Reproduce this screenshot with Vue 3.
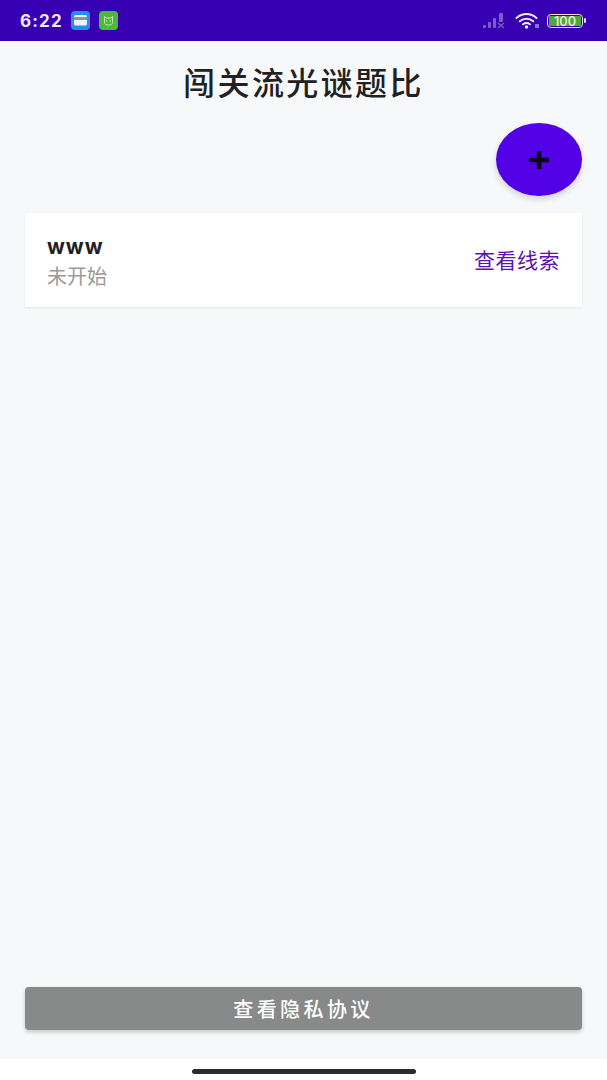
<script setup>
const quests = [{ name: 'www', status: '未开始' }];
</script>

<template>
  <div class="screen">
    <div class="status-bar">
      <div class="status-left">
        <span class="time">6:22</span>
        <svg class="app-icon" viewBox="0 0 19 19">
          <rect width="19" height="19" rx="4" fill="#2f86f5" />
          <rect x="3" y="4" width="13" height="10.500" rx="1.500" fill="#eef3fa" />
          <rect x="3" y="6" width="13" height="3" fill="#8a93a8" />
        </svg>
        <svg class="app-icon" viewBox="0 0 19 19">
          <rect width="19" height="19" rx="4" fill="#4fb83a" />
          <path d="M5.500 5.500l1.500 1.500h5l1.500-1.500v6c0 1.600-1.400 2.500-4 2.500s-4-.9-4-2.500z" fill="none" stroke="#cfeec6" stroke-width=".9" />
          <circle cx="7.800" cy="10" r=".7" fill="#cfeec6" />
          <circle cx="11.200" cy="10" r=".7" fill="#cfeec6" />
        </svg>
      </div>
      <div class="status-right">
        <svg class="signal" width="23" height="17" viewBox="0 0 23 17">
          <rect x="0" y="13" width="3" height="3" rx="1" fill="#7c5fc4" />
          <rect x="5" y="10" width="3" height="6" rx="1" fill="#7c5fc4" />
          <rect x="10" y="6" width="3" height="10" rx="1" fill="#7c5fc4" />
          <rect x="16" y="1" width="4" height="9" rx="1" fill="#7c5fc4" />
          <path d="M15 11l6 5M21 11l-6 5" stroke="#7c5fc4" stroke-width="1.400" />
        </svg>
        <svg class="wifi" width="25" height="17" viewBox="0 0 25 17">
          <path d="M1.500 6C7.500.8 15.500.8 21.500 6M4.800 9.300c4-3.300 9.400-3.300 13.400 0M8 12.300c2.200-1.600 4.800-1.600 7 0" fill="none" stroke="#f1e9fb" stroke-width="2" stroke-linecap="round" />
          <circle cx="11.500" cy="15" r="1.700" fill="#f1e9fb" />
          <rect x="20" y="12" width="4" height="4" fill="#8f70d0" />
        </svg>
        <div class="battery">
          <div class="battery-body"><span class="battery-fill">100</span></div>
          <div class="battery-cap"></div>
        </div>
      </div>
    </div>

    <div class="content">
      <h1 class="title">闯关流光谜题比</h1>
      <div class="fab-row">
        <button class="fab">
          <svg width="22" height="20" viewBox="0 0 22 20">
            <path d="M1 10h20M11 1v18" stroke="#0a0518" stroke-width="4.500" />
          </svg>
        </button>
      </div>
      <div v-for="q in quests" :key="q.name" class="card">
        <div class="card-info">
          <div class="card-name">{{ q.name }}</div>
          <div class="card-status">{{ q.status }}</div>
        </div>
        <span class="card-link">查看线索</span>
      </div>
      <div class="spacer"></div>
      <button class="privacy">查看隐私协议</button>
    </div>

    <div class="home-bar"><div class="home-indicator"></div></div>
  </div>
</template>

<style>
html, body { margin: 0; background: #f7f8fa; }
</style>

<style scoped>
.screen {
  width: 607px;
  height: 1080px;
  display: flex;
  flex-direction: column;
  overflow: hidden;
  font-family: "Roboto", "Noto Sans CJK SC", sans-serif;
  background: #f7f8fa;
}

.status-bar {
  height: 41px;
  flex: none;
  background: #3700b3;
  display: flex;
  align-items: center;
  justify-content: space-between;
  padding: 0 21px 0 20px;
}
.status-left { display: flex; align-items: center; }
.time {
  color: #f1e9fb;
  font-size: 17px;
  font-weight: 700;
  letter-spacing: 1.200px;
  width: 51px;
  font-family: "Inter", sans-serif;
}
.app-icon { width: 19px; height: 19px; margin-right: 9px; }
.status-right { display: flex; align-items: center; gap: 7px; }
.signal { margin-right: 2px; }
.battery { display: flex; align-items: center; }
.battery-body {
  width: 32px;
  height: 10px;
  border: 1.500px solid #e6dcf6;
  border-radius: 4px;
  padding: 1px;
  box-sizing: content-box;
}
.battery-fill {
  display: block;
  height: 10px;
  line-height: 10px;
  background: #52a63a;
  border-radius: 1px;
  color: #e9f5df;
  font-size: 13px;
  font-weight: 500;
  text-align: center;
  font-family: "Inter", sans-serif;
}
.battery-cap { width: 2px; height: 5px; background: #e6dcf6; margin-left: 1px; border-radius: 1px; }

.content {
  flex: 1;
  display: flex;
  flex-direction: column;
  padding: 0 25px 29px;
}
.title {
  margin: 24px 0 0;
  text-align: center;
  font-size: 32px;
  line-height: 38px;
  font-weight: 500;
  letter-spacing: 2.400px;
  color: #212121;
}
.fab-row { display: flex; justify-content: flex-end; margin-top: 20px; }
.fab {
  width: 86px;
  height: 73px;
  border: 0;
  padding: 0;
  border-radius: 50%;
  background: #5200e6;
  display: flex;
  align-items: center;
  justify-content: center;
  box-shadow: 0 3px 6px rgba(0, 0, 0, 0.16);
}
.card {
  margin-top: 17px;
  height: 94px;
  box-sizing: border-box;
  padding: 3px 22px 0;
  background: #fff;
  display: flex;
  align-items: center;
  justify-content: space-between;
  box-shadow: 0 1px 2px rgba(0, 0, 0, 0.08);
}
.card-name {
  font-family: "Inter", sans-serif;
  font-size: 21px;
  line-height: 26px;
  font-weight: 700;
  letter-spacing: 1px;
  color: #212121;
}
.card-status { font-size: 20px; line-height: 26px; margin-top: 4px; color: #9a9a9a; }
.card-link { font-size: 21px; font-weight: 400; color: #5a12b0; letter-spacing: .5px; margin-top: -5px; }
.spacer { flex: 1; }
.privacy {
  height: 43px;
  border: 0;
  border-radius: 4px;
  background: #888989;
  color: #fff;
  font-family: inherit;
  font-size: 20px;
  font-weight: 500;
  letter-spacing: 3.400px;
  box-shadow: 0 2px 4px rgba(0, 0, 0, 0.2);
}
.home-bar {
  height: 21px;
  flex: none;
  background: #fff;
  display: flex;
  justify-content: center;
  padding-top: 10px;
  box-sizing: border-box;
}
.home-indicator { width: 224px; height: 5px; border-radius: 3px; background: #2b2b2b; }
</style>
